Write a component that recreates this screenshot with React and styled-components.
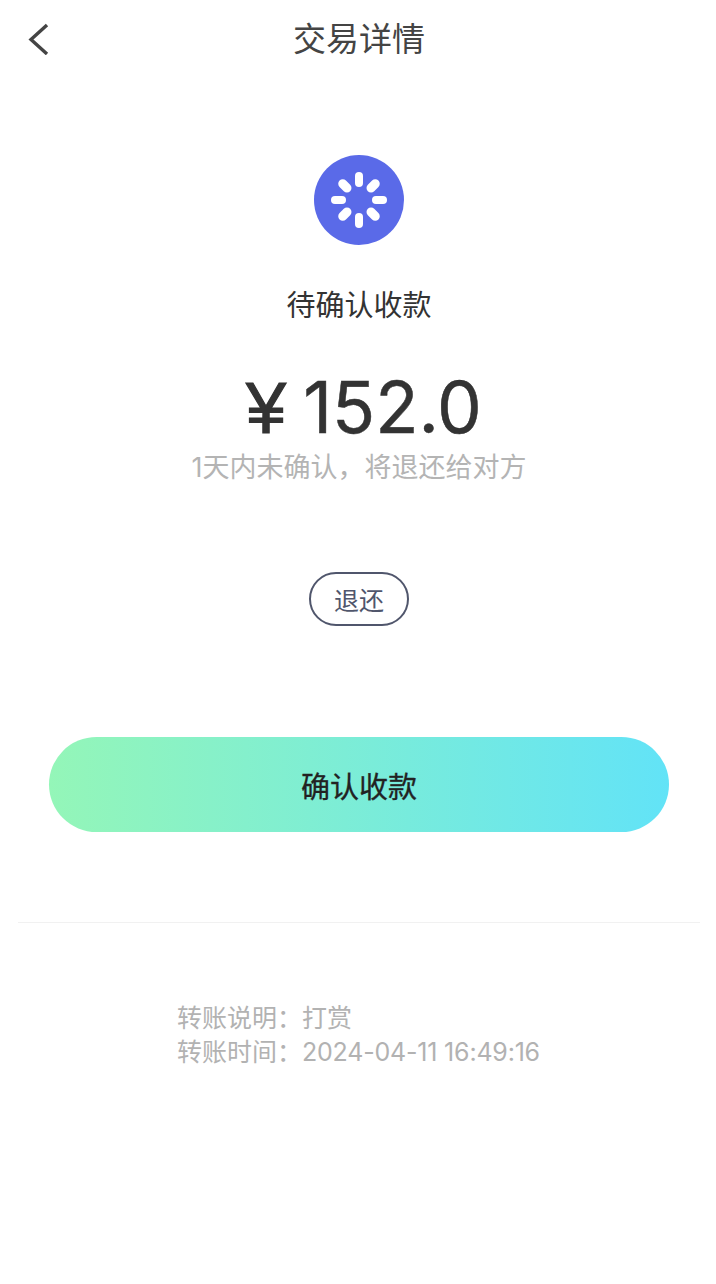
import React from "react";
import styled, { createGlobalStyle } from "styled-components";

const GlobalStyle = createGlobalStyle`
  html, body {
    margin: 0;
    padding: 0;
    background: #fff;
  }
  body {
    font-family: "Inter", "Noto Sans CJK SC", sans-serif;
  }
`;

const Page = styled.div`
  width: 716px;
  height: 1284px;
  padding-left: 2px;
  box-sizing: border-box;
  overflow: hidden;
  display: flex;
  flex-direction: column;
  align-items: center;
  background: #fff;
`;

const Header = styled.div`
  width: 100%;
  height: 78px;
  padding-left: 26px;
  box-sizing: border-box;
  display: grid;
  grid-template-columns: 1fr auto 1fr;
  align-items: center;
`;

const BackIcon = styled.svg`
  width: 21px;
  height: 32px;
  display: block;
`;

const Title = styled.div`
  font-size: 33px;
  line-height: 78px;
  color: #444;
  margin-left: -26px;
`;

const StatusIcon = styled.svg`
  width: 90px;
  height: 90px;
  margin-top: 77px;
  display: block;
`;

const Status = styled.div`
  font-size: 29px;
  line-height: 40px;
  color: #333;
  margin-top: 41px;
`;

const Amount = styled.div`
  font-size: 71px;
  line-height: 84px;
  color: #333;
  margin-top: 39px;
  margin-left: 10px;
  display: flex;
  align-items: baseline;
  gap: 17px;
  -webkit-text-stroke: 0.5px #333;
`;

const Yen = styled.span`
  font-family: "Liberation Sans", sans-serif;
  font-size: 72px;
  -webkit-text-stroke: 1.2px #333;
`;

const Hint = styled.div`
  font-size: 27px;
  line-height: 32px;
  color: #b4b4b4;
  margin-top: 2px;
`;

const RefundButton = styled.div`
  width: 100px;
  height: 54px;
  box-sizing: border-box;
  margin-top: 88px;
  border: 2px solid #50566c;
  border-radius: 27px;
  display: flex;
  align-items: center;
  justify-content: center;
  font-size: 25px;
  color: #50566c;
`;

const ConfirmButton = styled.div`
  width: 620px;
  height: 95px;
  margin-top: 111px;
  border-radius: 48px;
  background: linear-gradient(90deg, #94f6b8 0%, #62e3f7 100%);
  display: flex;
  align-items: center;
  justify-content: center;
  font-size: 29px;
  color: #222;
  -webkit-text-stroke: 0.3px #222;
`;

const Divider = styled.div`
  width: 682px;
  height: 1px;
  margin-top: 90px;
  background: #f1f1f1;
`;

const Details = styled.div`
  width: 364px;
  margin-top: 78px;
  display: flex;
  flex-direction: column;
  color: #b2b2b2;
  font-size: 25px;
  line-height: 34px;
`;

const DetailRow = styled.div`
  display: flex;
  white-space: nowrap;
`;

const DetailLabel = styled.span`
  width: 125px;
`;

const DateValue = styled.span`
  letter-spacing: -0.2px;
`;

const straightSpokes = [0, 90, 180, 270];
const diagonalSpokes = [45, 135, 225, 315];

const App = () => (
  <Page>
    <GlobalStyle />
    <Header>
      <BackIcon viewBox="0 0 21 32">
        <path d="M19 2 L3 16.5 L19 31" fill="none" stroke="#444" strokeWidth="3.4" />
      </BackIcon>
      <Title>交易详情</Title>
    </Header>
    <StatusIcon viewBox="0 0 90 90">
      <circle cx="45" cy="45" r="45" fill="#5a6ae8" />
      {straightSpokes.map((angle) => (
        <rect
          key={angle}
          x="41"
          y="17"
          width="8"
          height="15"
          rx="4"
          fill="#fff"
          transform={`rotate(${angle} 45 45)`}
        />
      ))}
      {diagonalSpokes.map((angle) => (
        <rect
          key={angle}
          x="40.5"
          y="17.5"
          width="9"
          height="15"
          rx="4.5"
          fill="#fff"
          transform={`rotate(${angle} 45 45)`}
        />
      ))}
    </StatusIcon>
    <Status>待确认收款</Status>
    <Amount>
      <Yen>¥</Yen>
      <span>152.0</span>
    </Amount>
    <Hint>1天内未确认，将退还给对方</Hint>
    <RefundButton>退还</RefundButton>
    <ConfirmButton>确认收款</ConfirmButton>
    <Divider />
    <Details>
      <DetailRow>
        <DetailLabel>转账说明：</DetailLabel>
        <span>打赏</span>
      </DetailRow>
      <DetailRow>
        <DetailLabel>转账时间：</DetailLabel>
        <DateValue>2024-04-11 16:49:16</DateValue>
      </DetailRow>
    </Details>
  </Page>
);

export default App;
